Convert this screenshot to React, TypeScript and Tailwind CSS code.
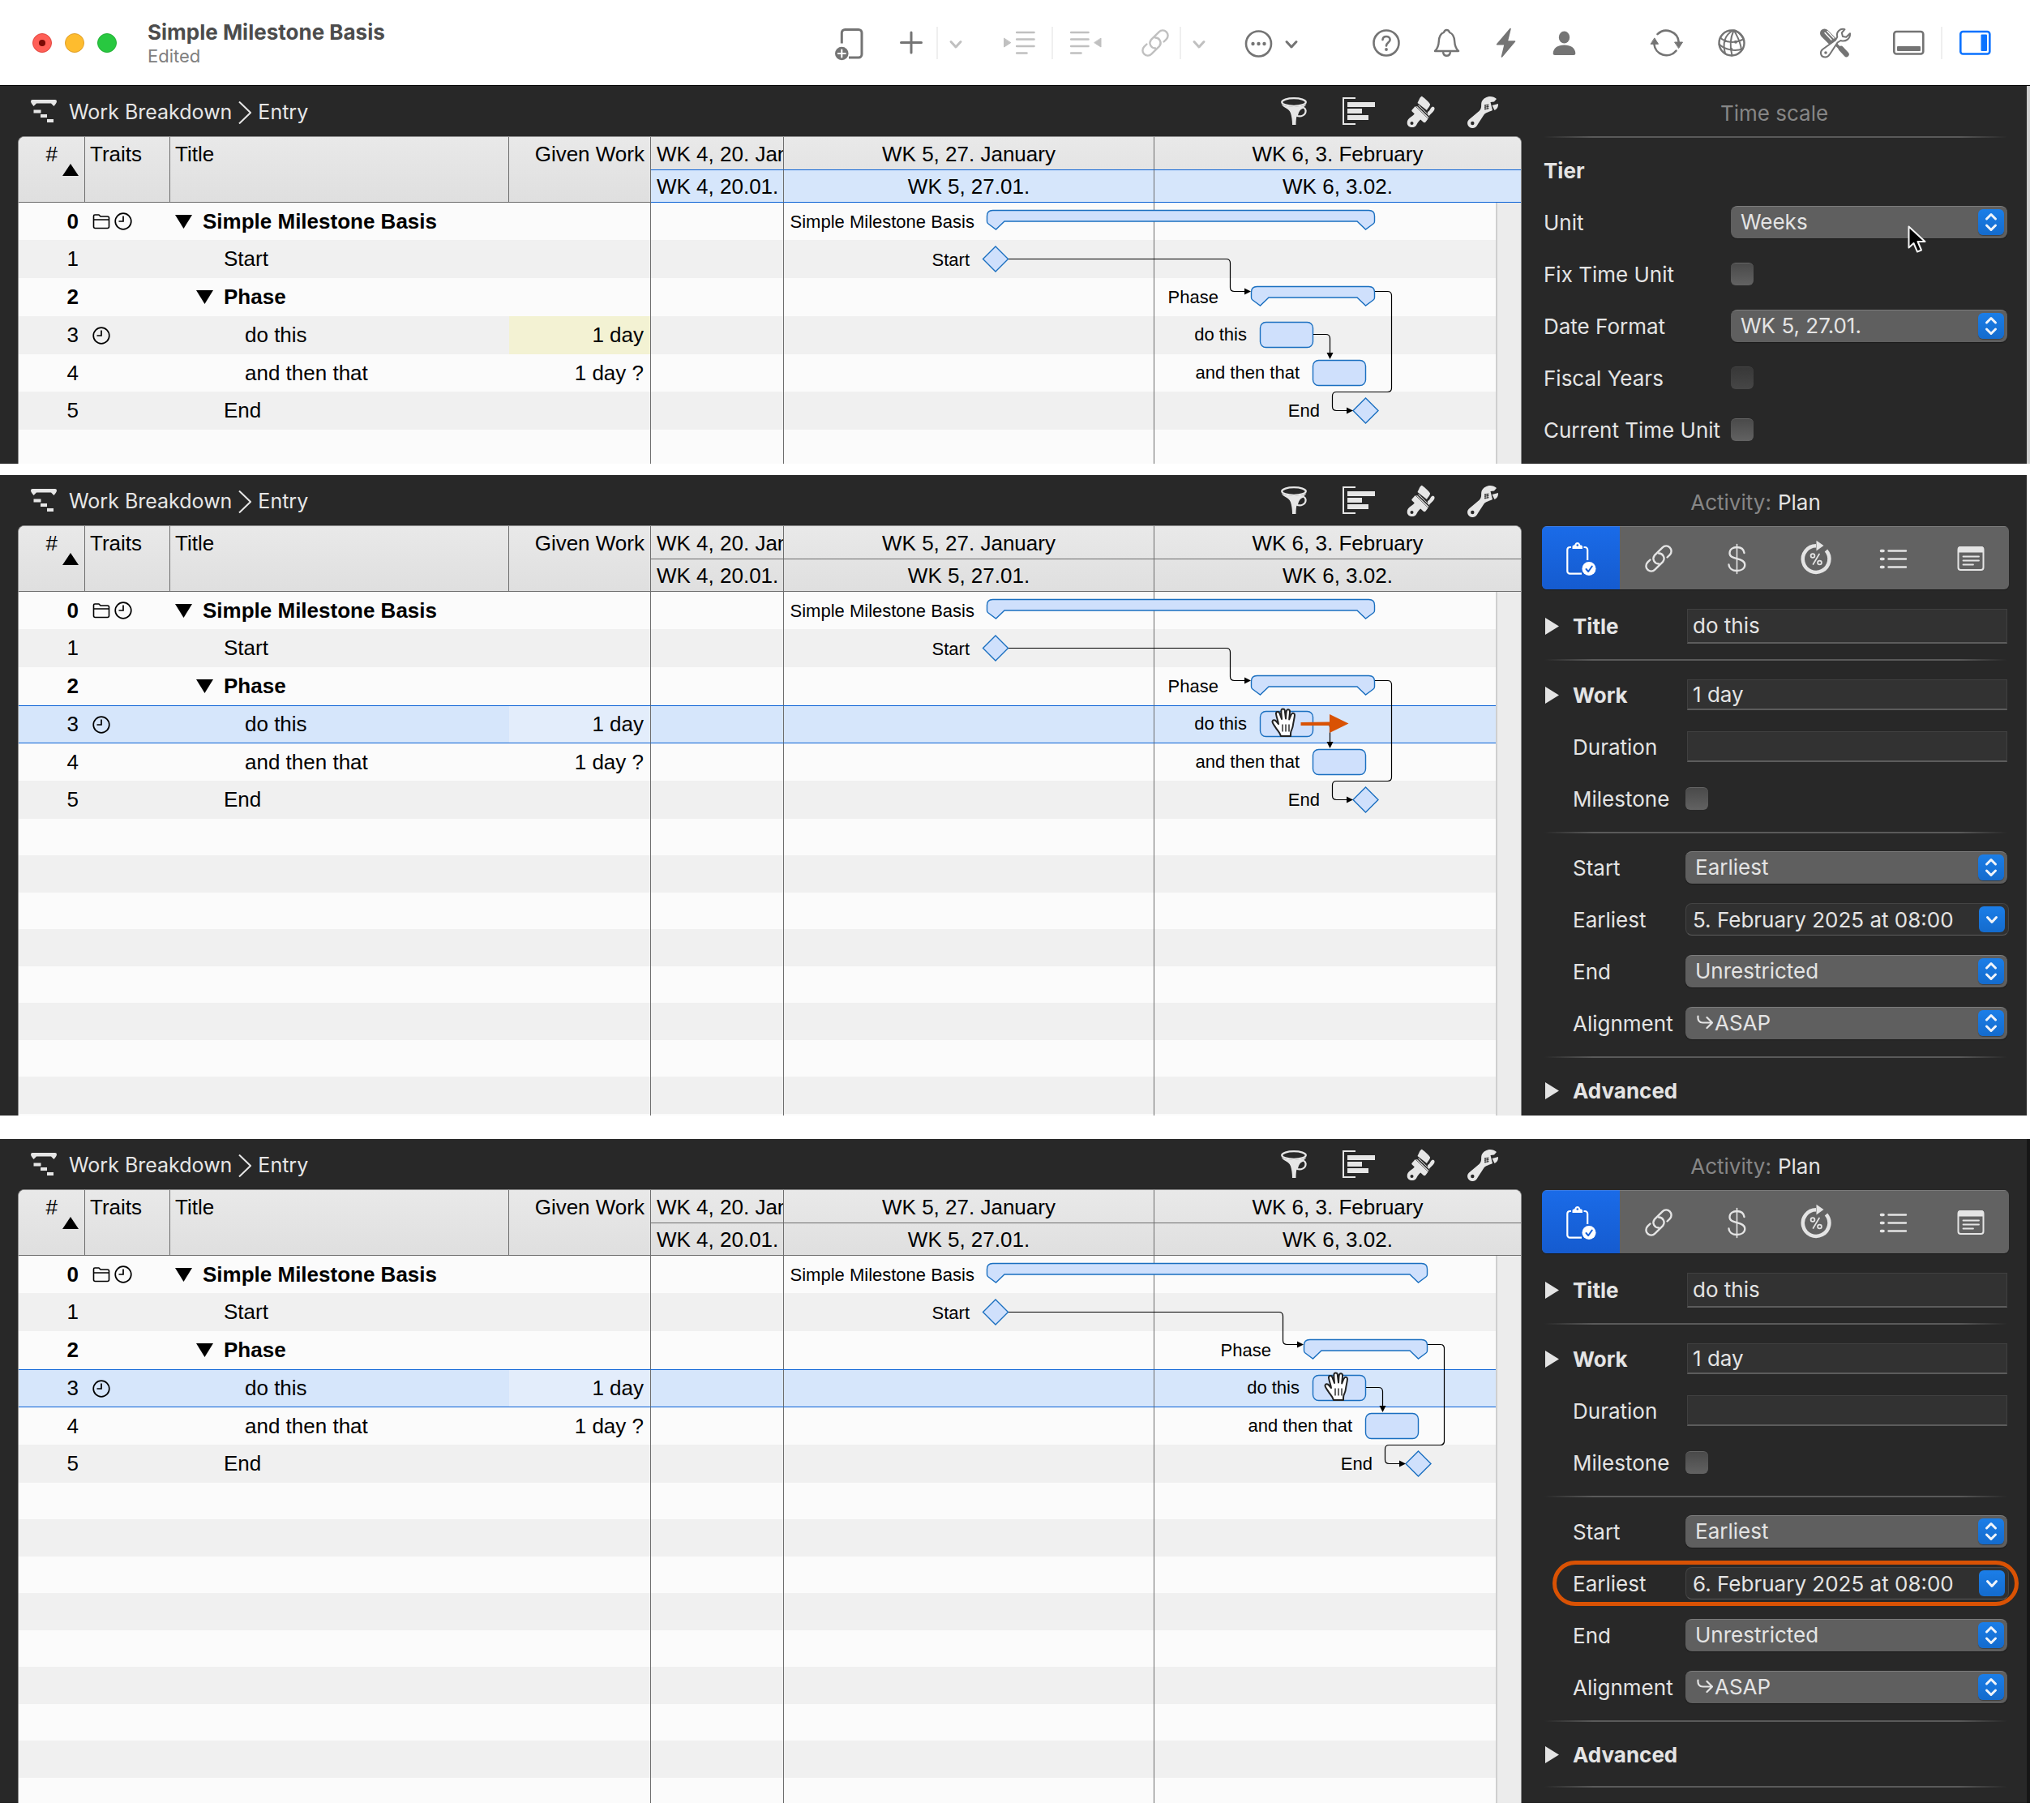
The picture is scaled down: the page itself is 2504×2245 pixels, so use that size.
import { ReactNode, useId, useState } from "react";
import clsx from "clsx";

type Row = {
  n: number;
  title: string;
  level: number;
  group?: boolean;
  folder?: boolean;
  clock?: boolean;
  work?: string;
};

const ROWS: Row[] = [
  { n: 0, title: "Simple Milestone Basis", level: 0, group: true, folder: true, clock: true },
  { n: 1, title: "Start", level: 1 },
  { n: 2, title: "Phase", level: 1, group: true },
  { n: 3, title: "do this", level: 2, clock: true, work: "1 day" },
  { n: 4, title: "and then that", level: 2, work: "1 day ?" },
  { n: 5, title: "End", level: 1 },
];

const WEEKS = [
  { long: "WK 4, 20. January", short: "WK 4, 20.01." },
  { long: "WK 5, 27. January", short: "WK 5, 27.01." },
  { long: "WK 6, 3. February", short: "WK 6, 3.02." },
];

/* ---------- icons ---------- */

function Icon({ children, className }: { children: ReactNode; className?: string }) {
  return (
    <svg viewBox="0 0 40 40" fill="none" stroke="currentColor" strokeWidth="2.6" strokeLinecap="round" strokeLinejoin="round"
      aria-hidden="true" className={clsx("size-10 shrink-0 overflow-visible", className)}>
      {children}
    </svg>
  );
}

const LinkIcon = () => (
  <Icon>
    <g transform="translate(20 20) rotate(-45)" strokeWidth="2.4">
      <path d="M8.5 6.4H13A6.4 6.4 0 0 0 13 -6.4H-1A6.4 6.4 0 0 0 -4.5 4.6" />
      <path d="M-8.5 -6.4H-13A6.4 6.4 0 0 0 -13 6.4H1A6.4 6.4 0 0 0 4.5 -4.6" />
    </g>
  </Icon>
);

const NewDocIcon = () => (
  <Icon>
    <path d="M11.3 20.5V7.5a4 4 0 0 1 4-4H32a4 4 0 0 1 4 4V34a4 4 0 0 1-4 4H20" strokeWidth="3" strokeLinecap="butt" />
    <circle cx="11.3" cy="33" r="8.3" fill="currentColor" stroke="none" />
    <path d="M11.3 28.5v9M6.8 33h9" stroke="#fff" strokeWidth="2" />
  </Icon>
);

const PlusIcon = () => <Icon><path d="M20 7v25M7.5 19.5h25" strokeWidth="3" /></Icon>;

const IndentIcon = () => (
  <Icon>
    <path d="M1.5 14.5v10.5l8-5.2z" fill="currentColor" strokeWidth="1" />
    <path d="M17.2 7h21.3M17.2 15.5h21.3M17.2 24h21.3M17.2 32.5h12.3" />
  </Icon>
);

const OutdentIcon = () => (
  <Icon>
    <path d="M39 14.5v10.5l-8-5.2z" fill="currentColor" strokeWidth="1" />
    <path d="M2.2 7h21.3M2.2 15.5h21.3M2.2 24h21.3M2.2 32.5h12.3" />
  </Icon>
);

const MoreIcon = () => (
  <Icon>
    <circle cx="20.5" cy="21" r="15.5" />
    <g fill="currentColor" stroke="none">
      <circle cx="13.5" cy="21" r="2.2" /><circle cx="20.5" cy="21" r="2.2" /><circle cx="27.5" cy="21" r="2.2" />
    </g>
  </Icon>
);

const HelpIcon = () => (
  <Icon>
    <circle cx="20" cy="20" r="15.5" />
    <path d="M15.500 16c.2-2.600 2-4 4.500-4s4.600 1.600 4.600 4c0 3.500-4.600 3.700-4.600 7.500" />
    <circle cx="20" cy="28" r="1.9" fill="currentColor" stroke="none" />
  </Icon>
);

const BellIcon = () => (
  <Icon>
    <path d="M6 30c3.200-3 4.500-6 4.800-12 .3-6 2.200-9.500 6.200-11 .6-2 1.700-3 3.500-3s2.900 1 3.500 3c4 1.500 5.900 5 6.200 11 .3 6 1.600 9 4.800 12z" strokeWidth="2.4" />
    <path d="M16 31c.4 3.200 2 4.800 4.500 4.800s4.100-1.600 4.500-4.800" strokeWidth="2.4" strokeLinecap="butt" />
  </Icon>
);

const BoltIcon = () => (
  <Icon><path d="M26 2.500 9.600 21.700h9.600L15.500 37 31.500 18h-9.300z" fill="currentColor" strokeWidth="1.6" /></Icon>
);

const PersonIcon = () => (
  <Icon>
    <g fill="currentColor" stroke="none">
      <ellipse cx="19.5" cy="13" rx="6.7" ry="7.5" />
      <path d="M5.700 32.500c.4-6.500 6-10 13.800-10s13.400 3.500 13.800 10c0 1.700-.7 2.500-2.200 2.500H7.900c-1.500 0-2.200-.8-2.200-2.500z" />
    </g>
  </Icon>
);

const SyncIcon = () => (
  <Icon>
    <path d="M8.500 9.200A15.400 15.400 0 0 1 34.700 19M31.500 29.600A15.400 15.400 0 0 1 4.300 21" />
    <path d="M.5 21.300h9L5 14.200zM30 19h9.500l-4.700 7.200z" fill="currentColor" strokeWidth="1" />
  </Icon>
);

const GlobeIcon = () => (
  <Icon>
    <g strokeWidth="2">
      <circle cx="20" cy="20" r="15.5" strokeWidth="2.4" />
      <path d="M21.500 4.500C12 10 8.500 20 12 33M22.500 4.500c-4 9-5 20-2 31M23 4.500c3.500 7 8 13 9 24" />
      <path d="M6 13.500c6 6 18 7.500 28.500 2M4.500 21.500c7 7 20 9.500 29.500 5.500M24 4.500c5 2.500 8.500 6 10.500 11" />
      <g fill="currentColor" stroke="none">
        <circle cx="12" cy="17.5" r="1.8" /><circle cx="25" cy="18.8" r="2" /><circle cx="19.5" cy="27.5" r="1.8" />
      </g>
    </g>
  </Icon>
);

const ToolsIcon = () => (
  <Icon>
    <path d="M6.500 8 16 17.500" strokeWidth="11" />
    <path d="m7 7.500 8 8.500M10 5.500l8 8.500" stroke="#fff" strokeWidth="1.5" />
    <path d="m20 21 7 7" strokeWidth="3.5" />
    <path d="m27 27 6.500 7" strokeWidth="6.5" />
    <path d="M31.500 3.200c-5.800-1.600-11 3.400-9.200 9.300L20 16.500 4 28c-3.500 3-2.500 9.500 3.500 9.500 3 0 4.200-1.500 5.500-3.500l9.500-14.500 4-2.500c6 2 12-2 11.500-8.700l-4.700 4.500-4.300-.8-1.200-4.500z"
      fill="#fff" strokeWidth="2" />
    <circle cx="8" cy="32" r="1.8" fill="currentColor" stroke="none" />
  </Icon>
);

const BottomPanelIcon = () => (
  <Icon>
    <rect x="2.3" y="6" width="36" height="27.5" rx="3" />
    <rect x="6" y="24" width="29" height="6" rx="1" fill="currentColor" stroke="none" />
  </Icon>
);

const SidePanelIcon = () => (
  <Icon>
    <rect x="2.3" y="6" width="36" height="27.5" rx="3" />
    <rect x="27.5" y="9.5" width="7.5" height="20.5" rx="1" fill="currentColor" stroke="none" />
  </Icon>
);

const FunnelIcon = () => (
  <Icon>
    <ellipse cx="18" cy="9" rx="14.8" ry="4.8" strokeWidth="2.2" />
    <path d="M2.500 11.500c3 5 9 4.500 11.500 11 1.300 4 2 9 2 14.500h4.500c0-5.500.5-10.500 2-14.500 2.500-6 8-6 11-11-5 4-26 4-31 0z" fill="currentColor" stroke="none" />
    <path d="M28 15.500c3.500 0 4.800 2.500 4.500 5.500-.4 3.500-5 6.500-10.500 5" strokeWidth="2.2" />
    <path d="M28.500 16c-3.500 1-5.500 4.500-6.500 9" strokeWidth="2" />
  </Icon>
);

const BarsIcon = () => (
  <Icon>
    <path d="M17 4H2v32h15" strokeWidth="2" strokeLinecap="butt" strokeLinejoin="miter" />
    <path d="M7 9h34v6H7zM7 17h18v6H7zM7 25h26v6H7z" fill="currentColor" stroke="none" />
  </Icon>
);

const BrushIcon = () => (
  <Icon>
    <g fill="currentColor" stroke="none">
      <path d="M21.500 1.800c1.500.2 8.500 6.500 10.500 9.700.3 2.300-3 5-4 7.500L16.500 10c1.500-2.500 2.500-6.700 5-8.200z" />
      <path d="M29 21c3-1 3.500-6 6.500-6.500 3 1 2.500 4 0 6.500l-6 6z" />
      <path d="m9.700 18.500 4-4.500L29.500 29.500l-3 4c-1 1-2 .8-3 0L9.700 20.500q-1-1 0-2z" />
      <path d="m18 12.500 13.500 13.500-2 3L15 14.500z" />
      <path d="m14 21.500 8.500 7.500c-3.500 2-5.500 4.500-7.500 8.500-3 4.500-11.300 3-11.300-3C3.700 28 11 27.500 14 21.500z" />
    </g>
    <circle cx="9.500" cy="35" r="2" fill="#282828" stroke="none" />
    <path d="M15.500 12.500 30.500 27" stroke="#282828" strokeWidth="1.6" />
  </Icon>
);

const WrenchIcon = () => (
  <Icon>
    <path d="M37 5c-5-5-15-4-18.300 3.500-1.500 4.500 1 7-3.200 11.500L3 30.500C-1 34 1.500 41.500 8 41c3-.3 4.500-2.300 6-5l7.500-11.500c2-3 7-3.500 10.500-5.500l-2.500-10 4.500-.5z" fill="currentColor" stroke="none" />
    <path d="m31.500 13 7.500-2c.3 4-1.500 6.500-4.500 8z" fill="currentColor" stroke="none" />
    <circle cx="7.3" cy="35" r="2.2" fill="#282828" stroke="none" />
    <path d="M23 12.500v5.500M26 12.300v5M22.500 13l4.500-.8M22.500 15.200l4.500-.8M22.500 17.500l4.500-.8" stroke="#282828" strokeWidth="1" />
  </Icon>
);

const PlanIcon = () => (
  <Icon>
    <path d="M8 6H6.500A3.200 3.200 0 0 0 3.300 9v26.500a3.200 3.200 0 0 0 3.200 3.200H21M23.500 6H25a3.200 3.200 0 0 1 3.200 3.200V22" strokeWidth="2.2" strokeLinecap="butt" />
    <path d="M9.500 8V5.500c0-1.500 1-2 2.500-2C13 1 14 0 15.800 0S18.500 1 19.500 3.500c1.500 0 2.500.5 2.500 2V8z" fill="currentColor" stroke="none" />
    <circle cx="15.8" cy="3.5" r="1.3" fill="#1765e0" stroke="none" />
    <circle cx="30" cy="32.5" r="8.5" fill="currentColor" stroke="none" />
    <path d="m26.500 33 2.700 3 4.600-6.500" stroke="#1660d8" strokeWidth="2" />
  </Icon>
);

const DollarIcon = () => (
  <Icon>
    <path d="M29.500 13c-.6-4.500-4-7-9-7s-9 2.500-9 7.200c0 4.300 3.500 5.600 9 7s9.800 3 9.800 7.600c0 4.700-4.300 7.200-9.800 7.200s-9.600-2.700-10-7.500" strokeWidth="2.3" />
    <path d="M20.500 2.500v36" strokeWidth="1.6" />
  </Icon>
);

const PercentIcon = () => (
  <Icon>
    <path d="M22 4.300A16.300 16.300 0 1 0 34.500 10" strokeWidth="4.5" strokeLinecap="butt" />
    <path d="M22.500-2.300 31.500 4l-9 6.500z" fill="currentColor" stroke="none" />
    <circle cx="18" cy="16.5" r="2.4" strokeWidth="1.8" />
    <circle cx="26.5" cy="25" r="2.4" strokeWidth="1.8" />
    <path d="m26 14.500-7.500 12.500" strokeWidth="1.7" />
  </Icon>
);

const ListIcon = () => (
  <Icon>
    <path d="M6.500 10.500h2.500M6.500 20.500h2.500M6.500 30.500h2.500" strokeWidth="3.6" />
    <path d="M15.500 10.500H37M15.500 20.500H37M15.500 30.500H37" strokeWidth="2.4" />
  </Icon>
);

const NotesIcon = () => (
  <Icon>
    <rect x="5.5" y="6" width="31" height="28" rx="3" strokeWidth="2" />
    <path d="M5 12.500V8c0-1.500 1-3 3-3h26c2 0 3 1.500 3 3v4.500z" fill="currentColor" stroke="none" />
    <path d="M11.500 17.500h19.500M11.500 22.500h19.500M11.500 27.500h12.500" strokeWidth="1.8" />
  </Icon>
);

const FolderIcon = () => (
  <svg viewBox="0 0 22 22" fill="none" stroke="currentColor" strokeWidth="1.6" strokeLinejoin="round" className="size-[22px]" aria-hidden="true">
    <path d="M1.500 17.500v-13c0-1 .5-1.500 1.500-1.500h5l2 2h8.500c1.200 0 2 .8 2 2v10.500c0 1.200-.8 2-2 2h-15c-1.200 0-2-.8-2-2zM1.500 9h19" />
  </svg>
);

const ClockIcon = () => (
  <svg viewBox="0 0 22 22" fill="none" stroke="currentColor" strokeWidth="1.7" className="size-[22px]" aria-hidden="true">
    <circle cx="11" cy="11" r="9.8" />
    <path d="M11 4.500V11H5.500" />
  </svg>
);

const DownTriangle = () => (
  <svg viewBox="0 0 21 17" fill="currentColor" className="h-[17px] w-[21px] shrink-0" aria-hidden="true"><path d="M0 0h21L10.500 17z" /></svg>
);

const HookArrow = () => (
  <svg viewBox="0 0 20 18" fill="none" stroke="currentColor" strokeWidth="2.2" strokeLinecap="round" strokeLinejoin="round"
    className="pointer-events-none absolute top-2.5 left-3.5 h-[18px] w-5" aria-hidden="true">
    <path d="M1.500 1.500c-.5 5 1.500 8 6 8H18.500M12.500 3l6.500 6.500-6.500 6.500" />
  </svg>
);

const Hand = () => (
  <>
    <path d="M12 35c-1-4-4-6.500-6.500-10.500C4 22 1 18.500 1.500 16.800c.7-2.300 3.300-1.800 5 .2l2.500 3C8.500 15.500 5.500 9 6 6.500c.5-2 3.500-2 4.300.2L13 14c-.2-4-1-8.500-.5-11 .4-2 3.700-2 4.200 0l1.300 10.500c.3-3.500.3-8 1-10 .7-1.800 3.700-1.500 4 .5.300 2.500-.7 7-.8 10.500 1-2.500 2-5.500 3.200-7 1.300-1.600 3.700-.6 3.600 1.500-.1 3-1.500 8-2 12-.4 4-1.500 5.500-2.500 8-.7 2-.5 4-.5 6z"
      fill="#fff" stroke="#222" strokeWidth="2" strokeLinejoin="round" />
    <path d="M14 20.500v9M18 20.500v9M22 20.500v9" stroke="#333" strokeWidth="1.5" />
  </>
);

/* ---------- toolbar ---------- */

function ToolButton({ label, disabled, className, children }: { label: string; disabled?: boolean; className?: string; children: ReactNode }) {
  return (
    <button type="button" aria-label={label} disabled={disabled} className={clsx("shrink-0", disabled ? "text-[#c0c0c0]" : "text-[#747474]", className)}>
      {children}
    </button>
  );
}

const ToolChevron = () => (
  <svg viewBox="0 0 20 40" fill="none" stroke="currentColor" strokeWidth="3" strokeLinecap="round" strokeLinejoin="round" className="h-10 w-5" aria-hidden="true">
    <path d="m4 18.500 6 6.500 6-6.500" />
  </svg>
);

const Separator = ({ className }: { className: string }) => <span className={clsx("h-10 w-0.5 shrink-0 bg-[#efefef]", className)} />;

function TitleBar() {
  return (
    <header className="flex h-[106px] items-center border-b border-black bg-white pr-12">
      <div className="flex gap-4 pl-10">
        <button type="button" aria-label="Close" className="flex size-6 items-center justify-center rounded-full border border-[#e2463f] bg-[#ff5f57]">
          <span className="size-2 rounded-full bg-[#7a0a05]" />
        </button>
        <button type="button" aria-label="Minimize" className="size-6 rounded-full border border-[#e0a02b] bg-[#febc2e]" />
        <button type="button" aria-label="Zoom" className="size-6 rounded-full border border-[#24b036] bg-[#28c840]" />
      </div>
      <div className="ml-[38px]">
        <h1 className="text-[26px] leading-8 font-bold text-[#4c4c4c]">Simple Milestone Basis</h1>
        <p className="text-[22px] leading-[26px] text-[#808080]">Edited</p>
      </div>
      <div className="ml-auto flex items-center">
        <ToolButton label="New document"><NewDocIcon /></ToolButton>
        <ToolButton label="Add" className="ml-[37px]"><PlusIcon /></ToolButton>
        <Separator className="ml-[11px]" />
        <ToolButton label="Add options" disabled className="ml-3"><ToolChevron /></ToolButton>
        <ToolButton label="Indent" disabled className="ml-12"><IndentIcon /></ToolButton>
        <Separator className="ml-5" />
        <ToolButton label="Outdent" disabled className="ml-5"><OutdentIcon /></ToolButton>
        <ToolButton label="Link" disabled className="ml-[46px]"><LinkIcon /></ToolButton>
        <Separator className="ml-2.5" />
        <ToolButton label="Link options" disabled className="ml-3"><ToolChevron /></ToolButton>
        <ToolButton label="More" className="ml-[43px]"><MoreIcon /></ToolButton>
        <ToolButton label="More options" className="ml-[11px]"><ToolChevron /></ToolButton>
        <ToolButton label="Help" className="ml-[87px]"><HelpIcon /></ToolButton>
        <ToolButton label="Notifications" className="ml-[34px]"><BellIcon /></ToolButton>
        <ToolButton label="Actions" className="ml-[33px]"><BoltIcon /></ToolButton>
        <ToolButton label="Account" className="ml-[33px]"><PersonIcon /></ToolButton>
        <ToolButton label="Synchronize" className="ml-[86px]"><SyncIcon /></ToolButton>
        <ToolButton label="Publish" className="ml-10"><GlobeIcon /></ToolButton>
        <ToolButton label="Tools" className="ml-22"><ToolsIcon /></ToolButton>
        <ToolButton label="Toggle bottom panel" className="ml-[50px]"><BottomPanelIcon /></ToolButton>
        <Separator className="ml-5" />
        <button type="button" aria-label="Toggle inspector" className="ml-5 text-[#0a72ff]"><SidePanelIcon /></button>
      </div>
    </header>
  );
}

function ViewBar() {
  return (
    <div className="flex h-[62px] items-center pr-7 pl-4 text-[#e6e6e6]">
      <svg viewBox="0 0 32 28" fill="currentColor" className="h-7 w-8" aria-hidden="true">
        <path d="M0 2Q0 0 2 0h28q2 0 2 2c0 2-2 4-3.500 6L25 4.500H7L3.500 8C2 6 0 4 0 2zM3.500 12.500h9v4h-9zM12 18h8v4h-8zM20 24h8v4h-8z" />
      </svg>
      <nav className="ml-[15px] flex items-center pt-1 text-[25px]">
        <a href="#breakdown">Work Breakdown</a>
        <svg viewBox="0 0 16 28" fill="none" stroke="currentColor" strokeWidth="2" className="mx-2 h-7 w-4" aria-hidden="true"><path d="m1 .5 14 13.500-14 13.500" /></svg>
        <a href="#entry">Entry</a>
      </nav>
      <div className="ml-auto flex gap-[37px]">
        <button type="button" aria-label="Filter"><FunnelIcon /></button>
        <button type="button" aria-label="Grouping"><BarsIcon /></button>
        <button type="button" aria-label="Style"><BrushIcon /></button>
        <button type="button" aria-label="View settings"><WrenchIcon /></button>
      </div>
    </div>
  );
}

/* ---------- outline + gantt ---------- */

const SHAPE = { fill: "#cfe0fc", stroke: "#1a6fc0", strokeWidth: 1.4 };

// summary bar with the two downward tips, between x1 and x2
const bracket = (x1: number, x2: number, y: number) =>
  `M${x1} ${y + 7}q0-7 7-7H${x2 - 7}q7 0 7 7v6.500q0 2-1.500 3L${x2 - 11} ${y + 23.5}l-10.500-10H${x1 + 21.5}l-10.500 10L${x1 + 1.5} ${y + 16.5}q-1.500-1-1.500-3z`;

const diamond = (cx: number, cy: number) => `M${cx} ${cy - 15.5}l15.500 15.500-15.500 15.500-15.500-15.500z`;

function Gantt({ shift, hand, dragArrow }: { shift: number; hand?: boolean; dragArrow?: boolean }) {
  const s = shift;
  return (
    <svg width="1043" height="282" className="pointer-events-none absolute top-20 left-[780px] text-[22px]" role="img" aria-label="Gantt chart">
      <g fill="#000" textAnchor="end">
        <text x="399" y="32">Simple Milestone Basis</text>
        <text x="393" y="79">Start</text>
        <text x={700 + s} y="125">Phase</text>
        <text x={735 + s} y="171">do this</text>
        <text x={800 + s} y="218">and then that</text>
        <text x={825 + s} y="265">End</text>
      </g>
      <g {...SHAPE}>
        <path d={bracket(414.5, 892.5 + s, 10.5)} />
        <path d={diamond(425, 70.5)} />
        <path d={bracket(740.5 + s, 892.5 + s, 104.5)} />
        <rect x={751.5 + s} y="148.5" width="65" height="31" rx="7" />
        <rect x={816.5 + s} y="195.5" width="65" height="31" rx="7" />
        <path d={diamond(881.5 + s, 257.5)} />
      </g>
      <g fill="none" stroke="#000" strokeWidth="1.2">
        <path d={`M441 70.500H${709.5 + s}q5 0 5 5V105.500q0 5 5 5h14`} />
        <path d={`M${817 + s} 163.500h15.500q5 0 5 5V187`} />
        <path d={`M${893 + s} 110.500h15.500q5 0 5 5V229.500q0 5-5 5h-63q-5 0-5 5V252.500q0 5 5 5h14`} />
      </g>
      <g fill="#000">
        <path d={`M${740 + s} 110.500l-8-4v8z`} />
        <path d={`M${837.5 + s} 194l-4-8h8z`} />
        <path d={`M${866 + s} 257.500l-8-4v8z`} />
      </g>
      {dragArrow && <path d="M801.500 162v4H837V175l23.500-11.500L837 152v9.500z" fill="#d95204" />}
      {hand && <g transform={`translate(${765 + s} 144)`}><Hand /></g>}
    </svg>
  );
}

type ChartProps = {
  selected?: number;
  marked?: number;
  tierActive?: boolean;
  shift?: number;
  hand?: boolean;
  dragArrow?: boolean;
  filler: number;
};

function ProjectTable({ selected, marked, tierActive, shift = 0, hand, dragArrow, filler }: ChartProps) {
  const head = "border-[#6d6d6d] border-r border-b bg-linear-to-b from-[#e9e9e9] to-[#dfdfdf] p-0 align-top font-normal leading-[42px]";
  return (
    <div className="relative min-h-0 flex-1 overflow-hidden rounded-t-lg border border-b-0 border-[#8c8c8c] bg-[#fbfbfb] font-['Liberation_Sans',Arial,sans-serif] text-[26px] text-black">
      <table className="w-full table-fixed border-separate border-spacing-0">
        <colgroup>
          <col className="w-[82px]" />
          <col className="w-[105px]" />
          <col className="w-[418px]" />
          <col className="w-[175px]" />
          <col className="w-[164px]" />
          <col className="w-[457px]" />
          <col />
          <col className="w-[31px]" />
        </colgroup>
        <thead>
          <tr className="h-[41px]">
            <th rowSpan={2} scope="col" className={head}>
              <div className="flex justify-end pr-[7px]">
                <span>#</span>
                <svg viewBox="0 0 20 15" fill="currentColor" className="mt-[33px] ml-1.5 h-[15px] w-5" aria-hidden="true"><path d="M0 15h20L10 0z" /></svg>
              </div>
            </th>
            <th rowSpan={2} scope="col" className={clsx(head, "text-left")}><span className="pl-1.5">Traits</span></th>
            <th rowSpan={2} scope="col" className={clsx(head, "text-left")}><span className="pl-1.5">Title</span></th>
            <th rowSpan={2} scope="col" className={clsx(head, "text-right")}><span className="pr-[7px]">Given Work</span></th>
            {WEEKS.map((w, i) => (
              <th key={w.long} scope="col" colSpan={i === 2 ? 2 : 1}
                className={clsx(
                  "h-[41px] overflow-hidden border-b bg-linear-to-b from-[#e9e9e9] to-[#e4e4e4] py-0 pt-0.5 leading-[38px] font-normal whitespace-nowrap",
                  tierActive ? "border-b-[#0b62d6]" : "border-b-[#6d6d6d]",
                  i < 2 && "border-r border-r-[#6d6d6d]",
                  i === 0 && "pl-[7px] text-left",
                )}>
                {w.long}
              </th>
            ))}
          </tr>
          <tr className="h-10">
            {WEEKS.map((w, i) => (
              <th key={w.short} scope="col" colSpan={i === 2 ? 2 : 1}
                className={clsx(
                  "h-10 overflow-hidden border-b py-0 leading-9 font-normal whitespace-nowrap",
                  tierActive ? "border-b-[#0b62d6] bg-[#d6e6fb]" : "border-b-[#6d6d6d] bg-linear-to-b from-[#e4e4e4] to-[#dfdfdf]",
                  i < 2 && "border-r border-r-[#6d6d6d]",
                  i === 0 && "pl-[7px] text-left",
                )}>
                {w.short}
              </th>
            ))}
          </tr>
        </thead>
        <tbody>
          {ROWS.map(r => {
            const sel = r.n === selected;
            const cell = clsx("p-0", sel && "border-y border-y-[#0b62d6]");
            const grid = clsx(cell, "border-r border-r-[#6d6d6d]");
            return (
              <tr key={r.n} className={clsx(
                r.n % 4 === 0 ? "h-[46px]" : "h-[47px]",
                r.group && "font-bold",
                sel ? "bg-[#d6e6fb]" : r.n % 2 ? "bg-[#f0f0f0]" : "bg-[#fbfbfb]",
              )}>
                <td className={clsx(cell, "pr-2 text-right")}>{r.n}</td>
                <td className={cell}>
                  <div className="flex gap-[5px] pl-[9px]">
                    {r.folder && <FolderIcon />}
                    {r.clock && <ClockIcon />}
                  </div>
                </td>
                <td className={cell}>
                  <div className={clsx("flex items-center", r.level === 0 && "pl-[6px]", r.level === 1 && "pl-8", r.level === 2 && "pl-[58px]")}>
                    <span className="w-[34px] shrink-0">{r.group && <DownTriangle />}</span>
                    <span>{r.title}</span>
                  </div>
                </td>
                <td className={clsx(grid, "pr-2 text-right", r.n === marked && "bg-[#f3f2d3]", sel && "bg-[#e3edfb]")}>{r.work}</td>
                <td className={grid} />
                <td className={grid} />
                <td className={cell} />
                <td className="border-l-2 border-[#cfcfcf] bg-[#ececec] p-0" />
              </tr>
            );
          })}
          {Array.from({ length: filler }, (_, i) => (
            <tr key={i} className={i % 2 ? "h-[46px] bg-[#f0f0f0]" : "h-[45px] bg-[#fbfbfb]"}>
              <td colSpan={4} className="border-r border-[#6d6d6d] p-0" />
              <td className="border-r border-[#6d6d6d] p-0" />
              <td className="border-r border-[#6d6d6d] p-0" />
              <td className="p-0" />
              <td className="border-l-2 border-[#cfcfcf] bg-[#ececec] p-0" />
            </tr>
          ))}
        </tbody>
      </table>
      <Gantt shift={shift} hand={hand} dragArrow={dragArrow} />
    </div>
  );
}

function Workspace({ children, inspector, className }: { children: ReactNode; inspector: ReactNode; className: string }) {
  return (
    <section className={clsx("flex overflow-hidden border-r-4 bg-[#282828]", className)}>
      <div className="flex min-w-0 flex-1 flex-col pl-[22px]">
        <ViewBar />
        {children}
      </div>
      <aside className="w-[623px] shrink-0 text-[26px] text-[#e4e4e4]">{inspector}</aside>
    </section>
  );
}

/* ---------- inspector ---------- */

// rule with a flat middle and short faded ends
const FadedRule = ({ className }: { className?: string }) => (
  <div role="separator" className={clsx("flex", className)}>
    <span className="h-0.5 w-15 bg-linear-to-r from-transparent to-[#5a5a5a]" />
    <span className="h-0.5 flex-1 bg-[#5a5a5a]" />
    <span className="h-0.5 w-15 bg-linear-to-r from-[#5a5a5a] to-transparent" />
  </div>
);

function Popup({ id, value, icon }: { id: string; value: string; icon?: ReactNode }) {
  return (
    <span className="relative block">
      <select id={id} defaultValue={value}
        className={clsx("block h-10 w-full appearance-none rounded-lg border-t border-[#7c7c7c] bg-[#5f5f5f] pr-10 pb-0.5 leading-9 shadow-[0_1px_1px_#1a1a1a]",
          icon ? "pl-9" : "pl-3")}>
        <option>{value}</option>
      </select>
      {icon}
      <span className="pointer-events-none absolute top-1 right-1 size-8 rounded-md bg-linear-to-b from-[#1b7ee8] to-[#146bcd] shadow-[0_1px_1px_#00000055]">
        <svg viewBox="0 0 32 32" fill="none" stroke="#f0f4fa" strokeWidth="3" strokeLinecap="round" strokeLinejoin="round" aria-hidden="true">
          <path d="m10.500 12 5.500-5.500 5.500 5.500M10.500 20l5.500 5.500 5.500-5.500" />
        </svg>
      </span>
    </span>
  );
}

function Check({ id, dim }: { id: string; dim?: boolean }) {
  return (
    <input id={id} type="checkbox" disabled={dim}
      className={clsx("block size-7 appearance-none rounded-md border-t bg-linear-to-b",
        dim ? "border-[#444] from-[#383838] to-[#464646]" : "border-[#666] from-[#4a4a4a] to-[#626262]")} />
  );
}

function TextField({ id, value, tall }: { id: string; value: string; tall?: boolean }) {
  return (
    <input id={id} type="text" defaultValue={value}
      className={clsx("ml-0.5 block w-[395px] border border-b-2 border-[#404040] border-b-[#5c5c5c] bg-[#323232] px-1.5", tall ? "h-[43px]" : "h-[38px]")} />
  );
}

function ScaleRow({ label, id, children }: { label: string; id: string; children: ReactNode }) {
  return (
    <div className="grid h-16 grid-cols-[231px_1fr] items-center whitespace-nowrap">
      <label htmlFor={id}>{label}</label>
      {children}
    </div>
  );
}

function TimeScaleInspector() {
  const id = useId();
  return (
    <>
      <h2 className="flex h-[62px] items-center justify-center pt-1 text-[#868686]">Time scale</h2>
      <div className="pr-6 pl-[27px]">
        <FadedRule className="mb-2" />
        <h3 className="flex h-16 items-center font-bold">Tier</h3>
        <ScaleRow label="Unit" id={id + "unit"}>
          <div className="relative">
            <Popup id={id + "unit"} value="Weeks" />
            <svg viewBox="0 0 24 36" className="pointer-events-none absolute top-6 left-[218px] h-9 w-6" aria-hidden="true">
              <path d="M1.500 1.500v26l6-5.500 4.500 10.500 5-2-4.500-10.500h9z" fill="#000" stroke="#f4f4f4" strokeWidth="2" strokeLinejoin="round" />
            </svg>
          </div>
        </ScaleRow>
        <ScaleRow label="Fix Time Unit" id={id + "fix"}><Check id={id + "fix"} /></ScaleRow>
        <ScaleRow label="Date Format" id={id + "format"}><Popup id={id + "format"} value="WK 5, 27.01." /></ScaleRow>
        <ScaleRow label="Fiscal Years" id={id + "fiscal"}><Check id={id + "fiscal"} dim /></ScaleRow>
        <ScaleRow label="Current Time Unit" id={id + "current"}><Check id={id + "current"} /></ScaleRow>
      </div>
    </>
  );
}

function PlanRow({ label, id, open, className, children }: { label: string; id?: string; open?: boolean; className?: string; children?: ReactNode }) {
  return (
    <div className={clsx("relative grid grid-cols-[35px_139px_1fr] items-center whitespace-nowrap", className || "h-16")}>
      {open ? (
        <button type="button" aria-label={"Expand " + label} className="pl-px">
          <svg viewBox="0 0 17 21" fill="currentColor" className="h-[21px] w-[17px]" aria-hidden="true"><path d="M0 0v21l17-10.500z" /></svg>
        </button>
      ) : <span />}
      {id ? <label htmlFor={id} className={open ? "font-bold" : ""}>{label}</label> : <span className="font-bold">{label}</span>}
      {children}
    </div>
  );
}

const TABS = [
  { name: "Plan", icon: <PlanIcon /> },
  { name: "Dependencies", icon: <LinkIcon /> },
  { name: "Cost", icon: <DollarIcon /> },
  { name: "Progress", icon: <PercentIcon /> },
  { name: "List", icon: <ListIcon /> },
  { name: "Notes", icon: <NotesIcon /> },
];

function PlanInspector({ date, highlight }: { date: string; highlight?: boolean }) {
  const id = useId();
  const [tab, setTab] = useState("Plan");
  return (
    <>
      <h2 className="flex h-[62px] items-center justify-center gap-2 pt-1 pr-[46px]">
        <span className="text-[#868686]">Activity:</span>
        <span>{tab}</span>
      </h2>
      <div className="mt-px mr-[22px] ml-[25px] flex h-[78px] overflow-hidden rounded-md bg-[#626262] shadow-[0_1px_1px_#1a1a1a]">
        {TABS.map(t => (
          <button key={t.name} type="button" aria-label={t.name} onClick={() => setTab(t.name)}
            className={clsx("flex flex-1 items-center justify-center border-t",
              t.name === tab ? "border-[#3b7de8] bg-linear-to-b from-[#1a6be8] to-[#155bcf] text-white" : "border-[#7c7c7c]")}>
            {t.icon}
          </button>
        ))}
      </div>
      <div className="mt-[13px] pr-6 pl-7">
        <PlanRow label="Title" id={id + "title"} open><TextField id={id + "title"} value="do this" tall /></PlanRow>
        <FadedRule className="mt-[9px] mb-2.5" />
        <PlanRow label="Work" id={id + "work"} open><TextField id={id + "work"} value="1 day" /></PlanRow>
        <PlanRow label="Duration" id={id + "duration"}><TextField id={id + "duration"} value="" /></PlanRow>
        <PlanRow label="Milestone" id={id + "milestone"}><Check id={id + "milestone"} /></PlanRow>
        <FadedRule className="mt-[9px] mb-2.5" />
        <PlanRow label="Start" id={id + "start"}><Popup id={id + "start"} value="Earliest" /></PlanRow>
        <PlanRow label="Earliest" id={id + "earliest"}>
          <div className="-mr-0.5 flex h-10 min-w-0 items-center rounded-lg border border-[#444] border-b-[#5c5c5c] bg-[#303030] pr-1 pl-2">
            <input id={id + "earliest"} type="text" defaultValue={date} className="min-w-0 flex-1 bg-transparent" />
            <button type="button" aria-label="Choose date" className="size-8 shrink-0 rounded-md bg-linear-to-b from-[#1b7ee8] to-[#146bcd]">
              <svg viewBox="0 0 32 32" fill="none" stroke="#f0f4fa" strokeWidth="3" strokeLinecap="round" strokeLinejoin="round" aria-hidden="true">
                <path d="m10.500 13.500 5.500 6 5.500-6" />
              </svg>
            </button>
          </div>
          {highlight && <span className="pointer-events-none absolute inset-y-1 -right-3.5 left-2.5 rounded-full border-[5px] border-[#d95204]" />}
        </PlanRow>
        <PlanRow label="End" id={id + "end"}><Popup id={id + "end"} value="Unrestricted" /></PlanRow>
        <PlanRow label="Alignment" id={id + "alignment"}><Popup id={id + "alignment"} value="ASAP" icon={<HookArrow />} /></PlanRow>
        <FadedRule className="mt-[9px] mb-2.5" />
        <PlanRow label="Advanced" open className="h-15" />
        <FadedRule className="mt-[9px] mb-2.5" />
      </div>
    </>
  );
}

export default function App() {
  return (
    <main className="min-h-screen bg-white font-[Inter,'DejaVu_Sans',sans-serif]">
      <TitleBar />
      <Workspace className="h-[466px] border-[#d0d0d0]" inspector={<TimeScaleInspector />}>
        <ProjectTable marked={3} tierActive filler={1} />
      </Workspace>
      <Workspace className="mt-3.5 h-[790px] border-white" inspector={<PlanInspector date="5. February 2025 at 08:00" />}>
        <ProjectTable selected={3} hand dragArrow filler={9} />
      </Workspace>
      <Workspace className="mt-[29px] h-[819px] border-[#161616]" inspector={<PlanInspector date="6. February 2025 at 08:00" highlight />}>
        <ProjectTable selected={3} hand shift={65} filler={9} />
      </Workspace>
    </main>
  );
}
